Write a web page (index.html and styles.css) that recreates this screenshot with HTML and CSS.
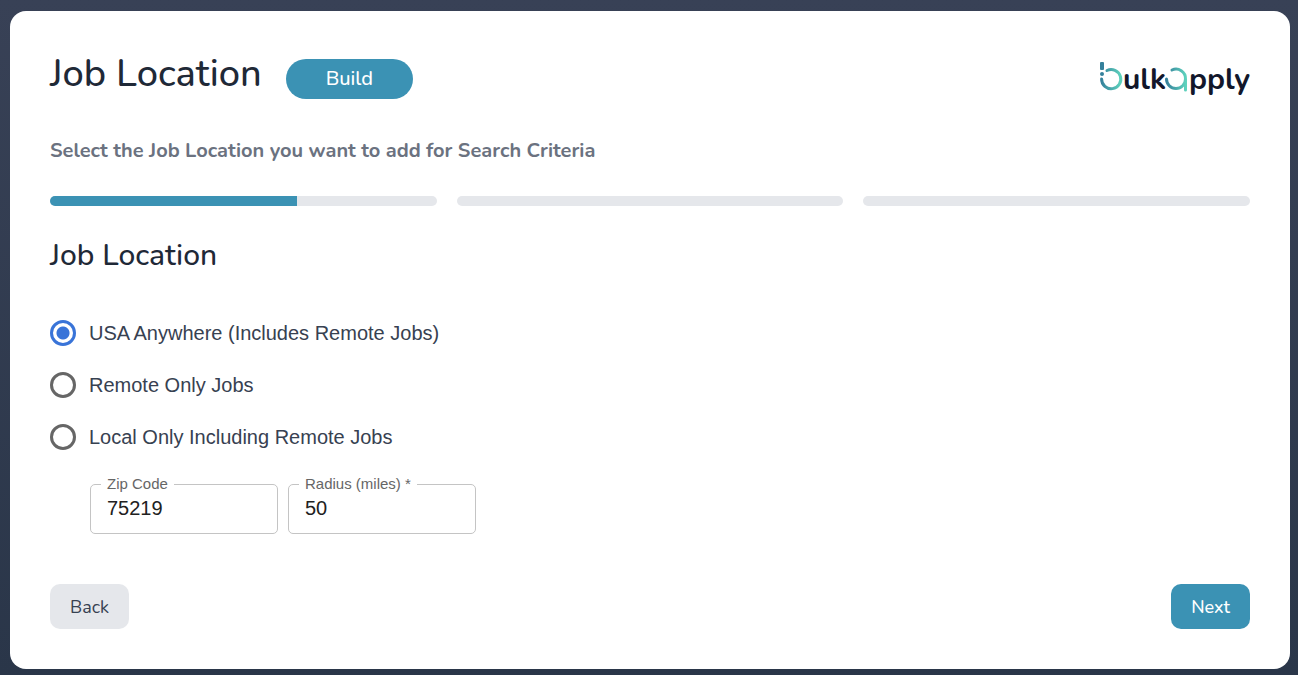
FILE: index.html
```html
<!DOCTYPE html>
<html lang="en">
<head>
    <meta charset="UTF-8">
    <meta name="viewport" content="width=device-width, initial-scale=1.0">
    <title>Job Location - bulkapply</title>
    <link rel="stylesheet" href="styles.css">
</head>
<body>
    <main class="card">
        <header class="card-header">
            <h1 class="title">Job Location</h1>
            <button type="button" class="build-btn">Build</button>
            <svg class="logo" viewBox="0 0 152 46" role="img" aria-label="bulkapply">
                <defs>
                    <linearGradient id="teal" gradientUnits="userSpaceOnUse" x1="3" y1="0" x2="23" y2="0">
                        <stop offset="0" stop-color="#35809b"/>
                        <stop offset="1" stop-color="#5ed3bd"/>
                    </linearGradient>
                    <linearGradient id="teal-a" gradientUnits="userSpaceOnUse" x1="68" y1="0" x2="88" y2="0">
                        <stop offset="0" stop-color="#35809b"/>
                        <stop offset="1" stop-color="#5ed3bd"/>
                    </linearGradient>
                </defs>
                <!-- b mark -->
                <rect x="2" y="6" width="4" height="8" rx="1" fill="#35809b"/>
                <circle cx="4" cy="18" r="2" fill="#35809b"/>
                <path d="M9 14.500A9.600 9.600 0 1 1 3.600 23" fill="none" stroke="url(#teal)" stroke-width="3" stroke-linecap="round"/>
                <!-- a mark -->
                <path d="M68.500 23A9.500 9.500 0 0 0 87.500 23M74 14A9.500 9.500 0 0 1 87.500 23V34" fill="none" stroke="url(#teal-a)" stroke-width="3" stroke-linecap="round"/>
                <text class="logo-text" x="25" y="33">ulk</text>
                <text class="logo-text" x="91" y="33">pply</text>
            </svg>
        </header>

        <p class="subtitle">Select the Job Location you want to add for Search Criteria</p>

        <div class="steps">
            <div class="step"><div class="step-fill" style="width: 64%"></div></div>
            <div class="step"></div>
            <div class="step"></div>
        </div>

        <h2 class="section-title">Job Location</h2>

        <form>
            <div class="options">
                <label class="option">
                    <input type="radio" name="location" value="usa" checked>
                    USA Anywhere (Includes Remote Jobs)
                </label>
                <label class="option">
                    <input type="radio" name="location" value="remote">
                    Remote Only Jobs
                </label>
                <label class="option">
                    <input type="radio" name="location" value="local">
                    Local Only Including Remote Jobs
                </label>
            </div>

            <div class="fields">
                <div class="field">
                    <label for="zip">Zip Code</label>
                    <input type="text" id="zip" value="75219">
                </div>
                <div class="field">
                    <label for="radius">Radius (miles) *</label>
                    <input type="text" id="radius" value="50" required>
                </div>
            </div>

            <div class="actions">
                <button type="button" class="btn">Back</button>
                <button type="submit" class="btn btn-next">Next</button>
            </div>
        </form>
    </main>
</body>
</html>
```
FILE: styles.css
```css
* {
    margin: 0;
    padding: 0;
    box-sizing: border-box;
}
html {
    min-height: 100%;
    background: linear-gradient(to bottom, #384156, #2a3649);
}
body {
    padding: 11px 8px 6px 10px;
    font-family: Nunito, "Noto Sans", sans-serif;
    color: #1f2937;
}
.card {
    padding: 40px;
    background: #fff;
    border-radius: 16px;
}

/* header */
.card-header {
    display: flex;
    align-items: center;
    gap: 24px;
    height: 56px;
}
.title {
    font-size: 38px;
    font-weight: 500;
    line-height: 44px;
    padding-bottom: 10px;
}
.build-btn {
    padding: 0 40px 2px;
    height: 40px;
    border: none;
    border-radius: 20px;
    background: #3b92b4;
    color: #fff;
    font-family: inherit;
    font-size: 20px;
    font-weight: 500;
    cursor: pointer;
}
.logo {
    width: 152px;
    height: 46px;
    margin-left: auto;
    overflow: visible;
}
.logo-text {
    font-family: Nunito, "Noto Sans", sans-serif;
    font-size: 30px;
    font-weight: 700;
    fill: #12172b;
}
.subtitle {
    margin-top: 29px;
    font-size: 20px;
    font-weight: 700;
    line-height: 30px;
    color: #6b7280;
}

/* progress */
.steps {
    display: grid;
    grid-template-columns: repeat(3, 1fr);
    gap: 20px;
    margin-top: 30px;
}
.step {
    height: 10px;
    border-radius: 5px;
    background: #e5e7eb;
    overflow: hidden;
}
.step-fill {
    height: 100%;
    background: #3b92b4;
}

.section-title {
    margin-top: 31px;
    font-size: 30px;
    font-weight: 500;
    line-height: 38px;
}

/* radio options */
.options {
    display: grid;
    gap: 26px;
    margin-top: 45px;
}
.option {
    display: flex;
    align-items: center;
    gap: 13px;
    width: fit-content;
    font-family: Arial, "Liberation Sans", sans-serif;
    font-size: 20px;
    line-height: 26px;
    color: #374151;
}
.option input {
    appearance: none;
    width: 26px;
    height: 26px;
    border: 3px solid #666;
    border-radius: 50%;
    background: #fff;
}
.option input:checked {
    border-color: #3974d8;
    background: radial-gradient(circle, #3974d8 6px, #fff 7px);
}

/* text fields */
.fields {
    display: flex;
    gap: 10px;
    margin: 34px 0 50px 40px;
}
.field {
    position: relative;
    width: 188px;
    font-family: Arial, "Liberation Sans", sans-serif;
}
.field label {
    position: absolute;
    top: -9px;
    left: 11px;
    padding: 0 6px;
    background: #fff;
    font-size: 15px;
    line-height: 18px;
    color: #666;
}
.field input {
    display: block;
    width: 100%;
    height: 50px;
    padding: 0 16px 2px;
    border: 1px solid #c4c4c4;
    border-radius: 5px;
    font-family: inherit;
    font-size: 20px;
    color: #212121;
}

/* bottom buttons */
.actions {
    display: flex;
    justify-content: space-between;
}
.btn {
    height: 45px;
    padding: 0 20px;
    border: none;
    border-radius: 10px;
    background: #e5e7eb;
    color: #374151;
    font-family: inherit;
    font-size: 18px;
    cursor: pointer;
}
.btn-next {
    background: #3b92b4;
    color: #fff;
    font-weight: 500;
}
```
